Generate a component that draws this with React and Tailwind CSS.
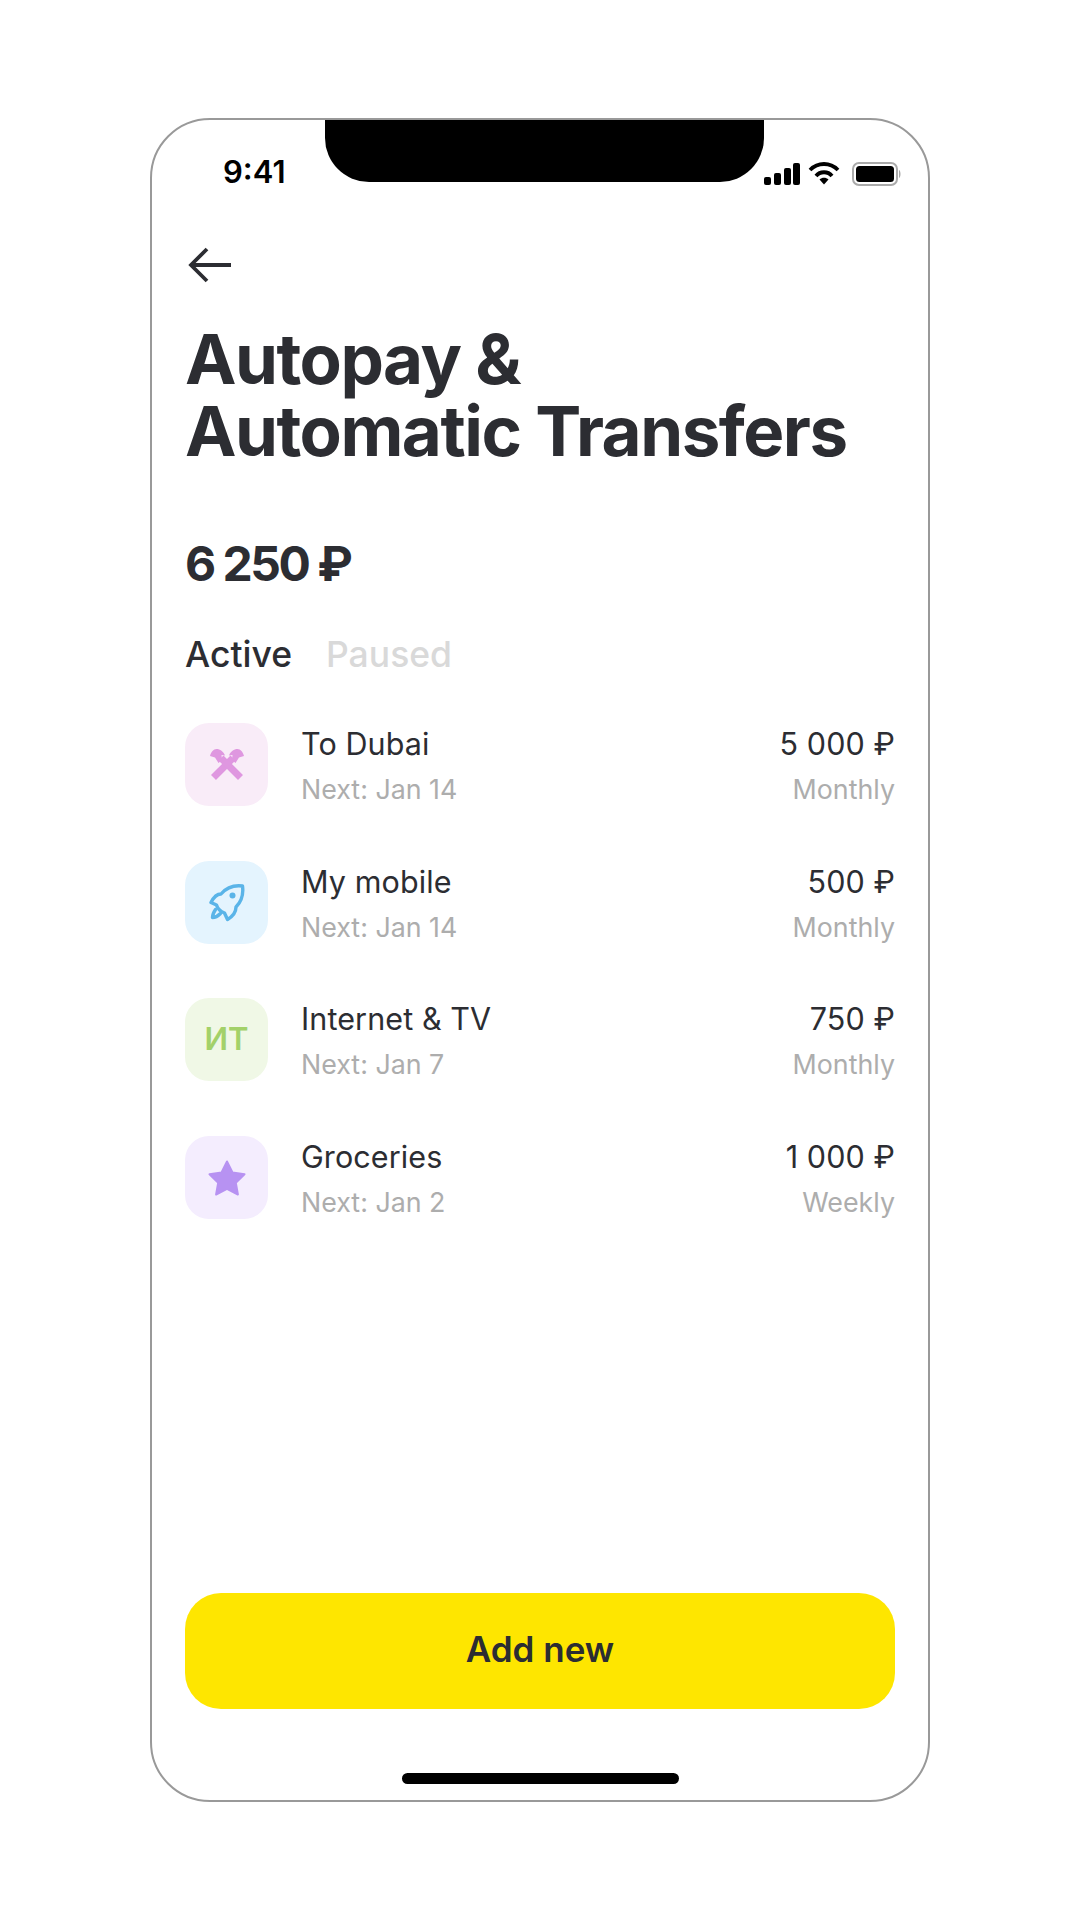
import React from "react";

const rows = [
  { name: "To Dubai", next: "Next: Jan 14", amt: "5 000 ₽", per: "Monthly", bg: "bg-[#f9ecf8]", icon: "x" },
  { name: "My mobile", next: "Next: Jan 14", amt: "500 ₽", per: "Monthly", bg: "bg-[#e4f4fe]", icon: "rocket" },
  { name: "Internet & TV", next: "Next: Jan 7", amt: "750 ₽", per: "Monthly", bg: "bg-[#f0f8e6]", icon: "it" },
  { name: "Groceries", next: "Next: Jan 2", amt: "1 000 ₽", per: "Weekly", bg: "bg-[#f4edfe]", icon: "star" },
];

function RowIcon({ kind }) {
  if (kind === "x")
    return (
      <svg width="34" height="32" viewBox="0 0 34 32" fill="none">
        <path d="M3.500 28.500 L23 9" stroke="#df97e0" strokeWidth="7" />
        <path d="M30.500 28.500 L11 9" stroke="#df97e0" strokeWidth="7" />
        <path d="M0 7 C1 3 3.500 0 6.500 0 C10 0 13.500 2.500 15 6.500 L11.500 6 L12 11 L8.500 14 L5 8.500 Z" fill="#df97e0" />
        <path d="M34 7 C33 3 30.500 0 27.500 0 C24 0 20.500 2.500 19 6.500 L22.500 6 L22 11 L25.500 14 L29 8.500 Z" fill="#df97e0" />
      </svg>
    );
  if (kind === "rocket")
    return (
      <svg width="37" height="39" viewBox="-1.500 -1.500 37 39" fill="none" stroke="#5ab4e8" strokeWidth="3.400" strokeLinejoin="round" strokeLinecap="round">
        <path d="M33 1.500 C25 0.500 17 3 11.500 9.500 C8 9.500 4 13 1.500 18 L7 20.500 C8 24 11 27 15 28.500 L18 35 C23 32 26.500 28 26.500 22.500 C32 17 34 9 33 1.500 Z" />
        <path d="M6 25 C4 28 3 31 3 33 C6 33 9 31 11 29" />
        <circle cx="23" cy="11" r="3" fill="#5ab4e8" stroke="none" />
      </svg>
    );
  if (kind === "star")
    return (
      <svg width="38" height="36" viewBox="0 0 38 36">
        <path d="M19 1.500 L24.500 12.500 L36.500 14.300 L27.800 22.700 L29.900 34.500 L19 28.900 L8.100 34.500 L10.200 22.700 L1.500 14.300 L13.500 12.500 Z" fill="#b792f2" stroke="#b792f2" strokeWidth="2" strokeLinejoin="round" />
      </svg>
    );
  return <span className="-mt-[2px] text-[31px] font-semibold leading-none text-[#a3d169]">ИТ</span>;
}

function Row({ r }) {
  return (
    <div className="flex h-[83px] items-center">
      <div className={`flex h-[83px] w-[83px] shrink-0 items-center justify-center rounded-[24px] ${r.bg}`}>
        <RowIcon kind={r.icon} />
      </div>
      <div className="ml-[33px] flex-1 pt-[2px]">
        <div className="text-[30.500px] leading-[36px] tracking-[0.100px] text-[#2c2d32]">{r.name}</div>
        <div className="mt-[11px] text-[26.800px] leading-[32px] text-[#adadad]">{r.next}</div>
      </div>
      <div className="pt-[2px] text-right">
        <div className="text-[30.500px] leading-[36px] tracking-[0.100px] text-[#2c2d32]">{r.amt}</div>
        <div className="mt-[11px] text-[26.800px] leading-[32px] text-[#adadad]">{r.per}</div>
      </div>
    </div>
  );
}

export default function App() {
  return (
    <div className="h-[1920px] w-[1080px] overflow-hidden bg-white pl-[150px] pt-[118px] font-['Inter',sans-serif]">
      <div className="relative flex h-[1684px] w-[780px] flex-col overflow-hidden rounded-[60px] border-2 border-[#999999] bg-white px-[33px]">
        <div className="absolute left-[173px] top-0 h-[62px] w-[439px] rounded-b-[44px] bg-black" />
        <div className="flex h-[70px] items-end justify-between pl-[38px]">
          <span className="text-[31px] font-semibold leading-[36px] text-black">9:41</span>
          <div className="mr-[-7px] flex items-center pb-[4px]">
            <svg width="36" height="22" viewBox="0 0 36 22" fill="black">
              <rect x="0" y="14" width="7" height="8" rx="2" />
              <rect x="10" y="10" width="7" height="12" rx="2" />
              <rect x="20" y="5" width="7" height="17" rx="2" />
              <rect x="29" y="0" width="7" height="22" rx="2" />
            </svg>
            <svg className="ml-[8px]" width="32" height="24" viewBox="0 0 32 24" fill="none" stroke="black" strokeWidth="3.800">
              <path d="M2 8 C10 0 22 0 30 8" />
              <path d="M8 14 C12 9 20 9 24 14" />
              <path d="M11.500 17.500 L16 22.500 L20.500 17.500 C18 15 14 15 11.500 17.500 Z" fill="black" stroke="none" />
            </svg>
            <svg className="ml-[12px]" width="50" height="24" viewBox="0 0 50 24">
              <rect x="1" y="1" width="44" height="22" rx="6" fill="none" stroke="#aaaaaa" strokeWidth="2" />
              <rect x="4" y="4" width="38" height="16" rx="3.500" fill="black" />
              <path d="M47 8 C49 9 49 15 47 16 Z" fill="#aaaaaa" />
            </svg>
          </div>
        </div>

        <svg className="ml-[3px] mt-[57px]" width="43" height="36" viewBox="0 0 43 36" fill="none" stroke="#2c2d32" strokeWidth="3.800">
          <path d="M43 18 H3" />
          <path d="M19 2 L3 18 L19 34" />
        </svg>

        <h1 className="mt-[40px] text-[69px] font-bold leading-[72px] tracking-[-1.500px] text-[#2c2d32]">
          Autopay &amp;
          <br />
          Automatic Transfers
        </h1>

        <div className="mt-[69px] text-[48px] font-bold leading-[56px] tracking-[-2.500px] text-[#2c2d32]">6 250 ₽</div>

        <div className="mt-[42px] flex gap-[34px] text-[35.500px] font-medium leading-[42px]">
          <span className="text-[#2c2d32]">Active</span>
          <span className="text-[#d9d9d9]">Paused</span>
        </div>

        <div className="mt-[47px] flex flex-col gap-[54.700px]">
          {rows.map((r) => (
            <Row key={r.name} r={r} />
          ))}
        </div>

        <div className="mt-auto flex h-[116px] items-center justify-center rounded-[36px] bg-[#fee600] pb-[3px] text-[35px] font-semibold text-[#2c2d32]">
          Add new
        </div>
        <div className="mx-auto mb-[16px] mt-[64px] h-[11px] w-[277px] rounded-full bg-black" />
      </div>
    </div>
  );
}
